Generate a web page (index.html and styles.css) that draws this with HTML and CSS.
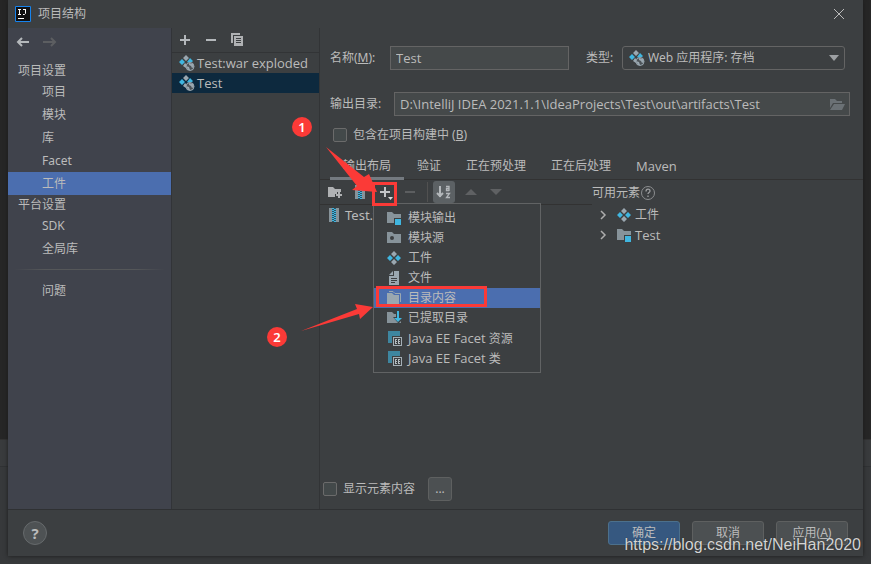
FILE: index.html
```html
<!DOCTYPE html>
<html lang="zh-CN">
<head>
<meta charset="utf-8">
<title>项目结构</title>
<link rel="stylesheet" href="styles.css">
</head>
<body>
<svg class="defs" aria-hidden="true">
  <symbol id="i-artifact" viewBox="0 0 16 16">
    <path fill="#9aa7b0" d="M8 1l3 3-3 3-3-3zM8 9l3 3-3 3-3-3z"/>
    <path fill="#40b6e0" d="M4 5l3 3-3 3-3-3zM12 5l3 3-3 3-3-3z"/>
  </symbol>
  <symbol id="i-web" viewBox="0 0 16 16">
    <path fill="#9aa7b0" d="M7 0l3 3-3 3-3-3zM6 8l1 1v4L4 11z"/>
    <path fill="#40b6e0" d="M3 4l3 3-3 3-3-3zM11 3l3 3-1 1-3 1-2-1z"/>
    <circle cx="11" cy="11.500" r="4" fill="#4c5358" stroke="#9aa7b0"/>
    <path fill="#9aa7b0" d="M7 11l3 1 1 3H9zM10 8l4 1 1 3-2 1-1-2-2-1z"/>
  </symbol>
  <symbol id="i-module" viewBox="0 0 16 16">
    <path fill="#87939a" d="M1 2h5l2 2h7v4H8v5H1z"/><path fill="#40b6e0" d="M9 9h6v6H9z"/>
  </symbol>
  <symbol id="i-source" viewBox="0 0 16 16">
    <path fill="#87939a" fill-rule="evenodd" d="M1 2h5l2 2h7v9H1zM6 6a2 2 0 100 4 2 2 0 000-4z"/>
  </symbol>
  <symbol id="i-file" viewBox="0 0 16 16">
    <path fill="#9aa7b0" fill-rule="evenodd" d="M8 1h5v14H3V6h5zM5 8v1h6V8zM5 10v1h6v-1zM5 12v1h4v-1z"/><path fill="#9aa7b0" d="M7 1v4H3z"/>
  </symbol>
  <symbol id="i-copydir" viewBox="0 0 16 16">
    <path fill="#9aa7b0" d="M1 3h5l2 2h5v9H1z"/><path fill="none" stroke="#9aa7b0" d="M3 1.500h4l2 2h5.500V12"/>
  </symbol>
  <symbol id="i-extract" viewBox="0 0 16 16">
    <path fill="#87939a" d="M1 2h5l2 2h2v3H7l5 6H1zM15 11v2h-2z"/>
    <path fill="#40b6e0" d="M11 1h2v7h3l-4 4-4-4h3z"/>
  </symbol>
  <symbol id="i-facet" viewBox="0 0 16 16">
    <path fill="#3e86a0" d="M2 1h12v5H6v7H2z"/>
    <path fill="#a5afb6" fill-rule="evenodd" d="M7 7h9v9H7zM8 8v7h7V8z"/>
    <path fill="#b5bdc2" d="M9 9h2v1h-1v1h1v1h-1v1h1v1H9zM12 9h2v1h-1v1h1v1h-1v1h1v1h-2z"/>
  </symbol>
  <symbol id="i-archive" viewBox="0 0 16 16">
    <path fill="#87939a" d="M3 1h3v14H3zM10 1h3v14h-3z"/><path fill="#28566a" d="M6 1h4v14H6z"/>
    <path stroke="#40b6e0" stroke-width="2" stroke-dasharray="1 1" d="M7 1v14"/>
    <path stroke="#40b6e0" stroke-width="2" stroke-dasharray="1 1" d="M9 2v13"/>
  </symbol>
</svg>

<main class="dialog">
  <header class="titlebar">
    <svg class="logo" viewBox="0 0 16 16"><path fill="#111" stroke="#1683ed" d="M.5.5h15v15H.5z"/><path fill="none" stroke="#fff" d="M3 3.500h3M4.500 3.500v5M3 8.500h3M8 3.500h3M10.500 3.500v4l-1 1H8M3 12.500h6"/></svg>
    <h1>项目结构</h1>
    <button class="close" aria-label="关闭"><svg viewBox="0 0 12 12"><path fill="none" stroke="#bbb" d="M1 1l10 10M11 1L1 11"/></svg></button>
  </header>

  <div class="body">
    <nav class="sidebar">
      <div class="history">
        <button aria-label="后退"><svg viewBox="0 0 16 16"><path fill="none" stroke="#b4b8bb" stroke-width="2" d="M14 8H3M7 4L3 8l4 4"/></svg></button>
        <button aria-label="前进" disabled><svg viewBox="0 0 16 16"><path fill="none" stroke="#5c5e61" stroke-width="2" d="M1 8h12M9 4l4 4-4 4"/></svg></button>
      </div>
      <h2>项目设置</h2>
      <a href="#project">项目</a>
      <a href="#modules">模块</a>
      <a href="#libs">库</a>
      <a href="#facet">Facet</a>
      <a href="#artifacts" class="active">工件</a>
      <h2>平台设置</h2>
      <a href="#sdk">SDK</a>
      <a href="#global">全局库</a>
      <hr>
      <a href="#problems">问题</a>
    </nav>

    <section class="artifacts">
      <div class="list-tools">
        <button aria-label="添加"><svg viewBox="0 0 16 16"><path stroke="#b4b8bb" stroke-width="2" d="M3 8h10M8 3v10"/></svg></button>
        <button aria-label="移除"><svg viewBox="0 0 16 16"><path stroke="#b4b8bb" stroke-width="2" d="M3 8h10"/></svg></button>
        <button aria-label="复制"><svg viewBox="0 0 16 16"><path fill="#afb1b3" d="M2 1h9v2H4v8H2z"/><path fill="#afb1b3" fill-rule="evenodd" d="M5 4h9v10H5zM7 6v1h5V6zM7 8v1h5V8zM7 10v1h5v-1z"/></svg></button>
      </div>
      <ul>
        <li><svg><use href="#i-web"/></svg>Test:war exploded</li>
        <li class="active"><svg><use href="#i-web"/></svg>Test</li>
      </ul>
    </section>

    <section class="editor">
      <form class="fields">
        <div class="row">
          <label for="name">名称(<u>M</u>):</label>
          <input id="name" class="name" type="text" value="Test">
          <label for="type" class="type-label">类型:</label>
          <span class="type">
            <svg><use href="#i-web"/></svg>
            <select id="type"><option>Web 应用程序: 存档</option></select>
            <svg class="caret" viewBox="0 0 10 6"><path fill="#9da0a3" d="M0 0h10L5 6z"/></svg>
          </span>
        </div>
        <div class="row output">
          <label for="out">输出目录:</label>
          <span class="path">
            <input id="out" type="text" value="D:\IntelliJ IDEA 2021.1.1\IdeaProjects\Test\out\artifacts\Test">
            <svg viewBox="0 0 16 16"><path fill="#6b7175" d="M1 3h5l2 2h5v2H4l-3 5z"/><path fill="#6b7175" d="M5 8h11l-3 6H1z"/></svg>
          </span>
        </div>
        <div class="check"><input type="checkbox" id="inc"><label for="inc">包含在项目构建中 (<u>B</u>)</label></div>
      </form>

      <div class="tabs" role="tablist">
        <button role="tab" class="active" aria-selected="true">输出布局</button>
        <button role="tab">验证</button>
        <button role="tab">正在预处理</button>
        <button role="tab">正在后处理</button>
        <button role="tab"><span class="latin">Maven</span></button>
      </div>

      <div class="layout">
        <div class="tree">
          <div class="tree-tools">
            <button aria-label="新建目录"><svg viewBox="0 0 16 16"><path fill="#afb1b3" d="M1 3h5l2 2h6v3h-4v2H8v3H1z"/><path stroke="#afb1b3" stroke-width="2" d="M9 11h6M12 8v6"/></svg></button>
            <button aria-label="新建存档"><svg><use href="#i-archive"/></svg></button>
            <div class="add">
              <button aria-label="添加副本"><svg viewBox="0 0 16 16"><path stroke="#c4c6c8" stroke-width="2" d="M3 8h10M8 3v10"/><path fill="#ddd" d="M11 13h5l-2.500 3z"/></svg></button>
              <ul class="menu">
                <li><button><svg><use href="#i-module"/></svg>模块输出</button></li>
                <li><button><svg><use href="#i-source"/></svg>模块源</button></li>
                <li><button><svg><use href="#i-artifact"/></svg>工件</button></li>
                <li><button><svg><use href="#i-file"/></svg>文件</button></li>
                <li><button class="active"><svg><use href="#i-copydir"/></svg>目录内容</button></li>
                <li><button><svg><use href="#i-extract"/></svg>已提取目录</button></li>
                <li><button><svg><use href="#i-facet"/></svg><span><span class="latin">Java EE Facet</span> 资源</span></button></li>
                <li><button><svg><use href="#i-facet"/></svg><span><span class="latin">Java EE Facet</span> 类</span></button></li>
              </ul>
            </div>
            <button aria-label="移除元素" disabled><svg viewBox="0 0 16 16"><path stroke="#5c5e60" stroke-width="2" d="M3 8h10"/></svg></button>
            <span class="divider"></span>
            <button class="sort" aria-label="按名称排序"><svg viewBox="0 0 16 16"><path fill="none" stroke="#b4b8bb" stroke-width="2" d="M4 2v11M1 9l3 3 3-3"/><path fill="none" stroke="#b4b8bb" stroke-width="1.300" d="M10 2.500h3v4.500M13 4.500h-2.500v2H13M10 9.500h3.500l-3 4H14"/></svg></button>
            <button aria-label="上移" disabled><svg viewBox="0 0 16 16"><path fill="#5f6163" d="M2 11h12L8 5z"/></svg></button>
            <button aria-label="下移" disabled><svg viewBox="0 0 16 16"><path fill="#5f6163" d="M2 5h12l-6 6z"/></svg></button>
          </div>
          <div class="node"><svg><use href="#i-archive"/></svg>Test.war</div>
        </div>
        <div class="available">
          <h3>可用元素<svg viewBox="0 0 16 16"><circle cx="8" cy="8" r="6.500" fill="none" stroke="#8c8e90"/><path fill="none" stroke="#9c9ea0" stroke-width="1.300" d="M6 6.500c0-3 4-3 4-.500 0 1.500-2 1.500-2 3M8 10.500V12"/></svg></h3>
          <div class="node"><svg viewBox="0 0 16 16"><path fill="none" stroke="#adadad" stroke-width="1.500" d="M6 4l4 4-4 4"/></svg><svg><use href="#i-artifact"/></svg>工件</div>
          <div class="node"><svg viewBox="0 0 16 16"><path fill="none" stroke="#adadad" stroke-width="1.500" d="M6 4l4 4-4 4"/></svg><svg><use href="#i-module"/></svg><span class="latin">Test</span></div>
        </div>
      </div>

      <div class="check bottom"><input type="checkbox" id="show"><label for="show">显示元素内容</label><button class="btn more">...</button></div>
    </section>
  </div>

  <footer>
    <button class="help" aria-label="帮助">?</button>
    <button class="btn primary">确定</button>
    <button class="btn">取消</button>
    <button class="btn">应用(<u>A</u>)</button>
  </footer>
</main>

<div class="notes">
  <svg viewBox="0 0 871 564">
    <path fill="#fb3a37" d="M326 147l38 30 5-3 8 18-25-2 5-4zM301 331l56-22-2-5 18 3-13 12-1-5z"/>
    <path fill="none" stroke="#fb3a37" stroke-width="3" d="M373.500 183.500h22v21h-22zM377.500 287.500h108v18h-108z"/>
  </svg>
  <span class="badge one">1</span>
  <span class="badge two">2</span>
  <span class="watermark">https://blog.csdn.net/NeiHan2020</span>
</div>
</body>
</html>
```
FILE: styles.css
```css
* { box-sizing: border-box; }
body {
  margin: 0;
  min-height: 100vh;
  padding: 0 8px 8px;
  display: flex;
  position: relative;
  background: linear-gradient(#262626 439px, #323232 439px, #323232 440px, #393b3d 440px, #393b3d 466px, #303234 466px, #303234 467px, #37393b 467px);
  color: #bbb;
  font: 12px/20px "Noto Sans", "Noto Sans CJK SC", sans-serif;
}
h1, h2, h3, ul { margin: 0; padding: 0; font-size: 12px; font-weight: 400; list-style: none; }
button, input, select { font: inherit; color: inherit; margin: 0; }
button { border: 0; padding: 0; background: none; }
svg { width: 16px; height: 16px; flex: none; display: block; }
.defs { position: absolute; width: 0; height: 0; }
.latin { font-family: "Open Sans", sans-serif; font-size: 13px; }

.dialog {
  flex: 1;
  min-width: 0;
  display: flex;
  flex-direction: column;
  background: #3c3f41;
  box-shadow: 0 0 4px #1c1c1c;
}
.titlebar { display: flex; align-items: center; height: 28px; padding: 0 18px 0 7px; gap: 7px; }
.close { margin-left: auto; }
.close svg { width: 12px; height: 12px; }

.body { flex: 1; display: flex; }
.sidebar { width: 164px; background: #40434c; border-right: 1px solid #323438; }
.history { display: flex; gap: 11px; height: 33px; padding: 6px 7px; }
.history button { height: 16px; }
.sidebar h2 { padding-left: 10px; line-height: 19px; }
.sidebar a { display: block; padding-left: 34px; line-height: 23px; color: inherit; text-decoration: none; }
.sidebar .active { background: #4b6eaf; }
.sidebar hr { height: 1px; margin: 9px 6px; border: 0; background: linear-gradient(90deg, transparent, #555759 20%, #555759 80%, transparent); }

.artifacts { width: 148px; border-right: 1px solid #323436; }
.list-tools { display: flex; gap: 10px; height: 25px; padding: 4px 5px; border-bottom: 1px solid #323436; }
.artifacts li { display: flex; align-items: center; gap: 2px; height: 20px; padding-left: 7px; font: 13px/18px "Open Sans", sans-serif; }
.artifacts .active { background: #0d293e; }

.editor { flex: 1; min-width: 0; display: flex; flex-direction: column; }
.fields { padding: 18px 13px 0 10px; }
.row { display: flex; align-items: center; height: 24px; }
.row > label { flex: none; width: 60px; }
.row > .type-label { width: 36px; margin-left: 17px; }
.row input { height: 24px; padding: 0 5px; background: #45494a; border: 1px solid #646464; font: 13px/18px "Open Sans", sans-serif; }
.row .name { flex: 1; min-width: 0; }
.type { flex: 0 1 223px; position: relative; margin-right: 5px; }
.type svg { position: absolute; left: 7px; top: 4px; }
.type .caret { left: auto; right: 6px; top: 9px; width: 10px; height: 6px; }
.type select { width: 100%; height: 24px; padding: 0 20px 0 25px; appearance: none; background: #3c3f41; border: 1px solid #646464; border-radius: 3px; display: block; }
.output { margin-top: 22px; }
.output > label { width: 64px; }
.path { flex: 1; position: relative; }
.path input { width: 100%; display: block; }
.path svg { position: absolute; right: 5px; top: 4px; }
.check { display: flex; align-items: center; gap: 6px; }
.check input { appearance: none; width: 14px; height: 14px; border: 1px solid #6b6b6b; border-radius: 2px; background: #43494a; }
.fields .check { margin: 9px 0 0 3px; }

.tabs { display: flex; gap: 1px; height: 35px; padding: 7px 10px 0; border-bottom: 1px solid #323232; }
.tabs button { height: 28px; padding: 3px 12px 0; border-bottom: 3px solid transparent; }
.tabs .active { padding: 3px 13px 0; border-color: #747a80; }

.layout { flex: 1; display: flex; }
.tree { flex: 1; }
.tree-tools { display: flex; align-items: center; height: 25px; padding-left: 2px; border-bottom: 1px solid #323232; }
.tree-tools button { width: 25px; height: 22px; display: flex; align-items: center; justify-content: center; }
.add { position: relative; }
.divider { width: 1px; height: 20px; margin: 0 5px; background: #515151; }
.tree-tools .sort { width: 22px; background: #5c6164; border-radius: 3px; margin-right: 3px; }
.menu { position: absolute; z-index: 2; left: 1px; top: 22px; width: 168px; padding: 4px 0; background: #3c3f41; border: 1px solid #616364; }
.menu button { width: 100%; height: 20px; padding-left: 12px; gap: 6px; justify-content: flex-start; }
.menu .active { background: #4b6eaf; }
.node { display: flex; align-items: center; gap: 3px; height: 20px; font-size: 13px; }
.tree .node { padding-left: 6px; }
.available { width: 271px; }
.available h3 { display: flex; align-items: center; height: 25px; }
.available .node { padding-left: 3px; gap: 5px; font-size: 12px; }
.available .node svg + svg { margin-right: -2px; }
.bottom { padding: 0 3px; margin-bottom: 8px; }

.btn { height: 24px; width: 72px; border: 1px solid #5e6060; border-radius: 3px; background: #4c5052; }
.more { width: 24px; margin-left: 7px; }
.primary { background: #365880; border-color: #4c708c; }
footer { display: flex; align-items: center; gap: 12px; height: 47px; padding: 0 15px; border-top: 1px solid #2f3133; }
.help { width: 24px; height: 24px; margin-right: auto; border: 1px solid #666a6c; border-radius: 50%; background: #4e5254; font: bold 15px/20px "Noto Sans", sans-serif; }

.notes { position: absolute; inset: 0; z-index: 3; pointer-events: none; }
.notes svg { width: 871px; height: 564px; }
.badge { position: absolute; width: 20px; height: 20px; border-radius: 50%; background: #fb3a37; color: #fff; text-align: center; font-size: 13px; font-weight: 600; }
.one { left: 292px; top: 117px; }
.two { left: 267px; top: 327px; }
.watermark { position: absolute; right: 10px; bottom: 9px; font: 16px/20px "Liberation Sans", sans-serif; color: #d4d4d4; text-shadow: 0 0 1px #222; }
```
